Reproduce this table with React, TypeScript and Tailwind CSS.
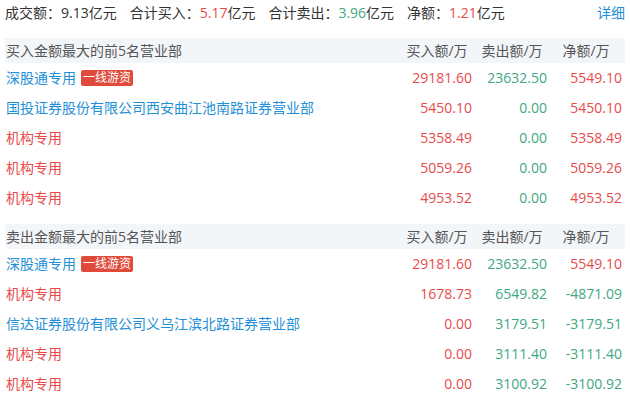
import React from "react";

const RED = "text-[#e84a4a]";
const GREEN = "text-[#3fa880]";
const BLUE = "text-[#1f8fd8]";

type Row = { name: string; badge?: boolean; link?: boolean; buy: string; sell: string; net: string };

const buyRows: Row[] = [
  { name: "深股通专用", badge: true, link: true, buy: "29181.60", sell: "23632.50", net: "5549.10" },
  { name: "国投证券股份有限公司西安曲江池南路证券营业部", link: true, buy: "5450.10", sell: "0.00", net: "5450.10" },
  { name: "机构专用", buy: "5358.49", sell: "0.00", net: "5358.49" },
  { name: "机构专用", buy: "5059.26", sell: "0.00", net: "5059.26" },
  { name: "机构专用", buy: "4953.52", sell: "0.00", net: "4953.52" },
];

const sellRows: Row[] = [
  { name: "深股通专用", badge: true, link: true, buy: "29181.60", sell: "23632.50", net: "5549.10" },
  { name: "机构专用", buy: "1678.73", sell: "6549.82", net: "-4871.09" },
  { name: "信达证券股份有限公司义乌江滨北路证券营业部", link: true, buy: "0.00", sell: "3179.51", net: "-3179.51" },
  { name: "机构专用", buy: "0.00", sell: "3111.40", net: "-3111.40" },
  { name: "机构专用", buy: "0.00", sell: "3100.92", net: "-3100.92" },
];

function colorOf(v: string) {
  if (v.startsWith("-")) return GREEN;
  return RED;
}

function Section({ title, rows }: { title: string; rows: Row[] }) {
  return (
    <div className="mx-[5px]">
      <div className="flex h-[25px] items-center bg-[#f3f6f9] pr-[3px] text-[#555555]">
        <div className="flex-1 pl-[1px]">{title}</div>
        <div className="w-[75px] pl-[5px] text-center">买入额/万</div>
        <div className="w-[75px] pl-[5px] text-center">卖出额/万</div>
        <div className="w-[75px] pl-[3px] text-center">净额/万</div>
      </div>
      {rows.map((r, i) => (
        <div key={i} className="flex h-[30px] items-center pr-[3px]">
          <div className={`flex flex-1 items-center pl-[1px] ${r.link ? BLUE : RED}`}>
            <span>{r.name}</span>
            {r.badge && (
              <span className="ml-[5px] flex h-[16px] items-center rounded-[2px] bg-[#e04a3b] px-[2px] text-[12px] leading-[16px] text-white">
                一线游资
              </span>
            )}
          </div>
          <div className={`w-[75px] text-right ${RED}`}>{r.buy}</div>
          <div className={`w-[75px] text-right ${GREEN}`}>{r.sell}</div>
          <div className={`w-[75px] text-right ${colorOf(r.net)}`}>{r.net}</div>
        </div>
      ))}
    </div>
  );
}

export default function App() {
  return (
    <div
      className="h-[399px] w-[630px] overflow-hidden bg-white text-[14px] leading-[20px] text-[#333333]"
      style={{ fontFamily: '"Open Sans", "Noto Sans CJK SC", sans-serif' }}
    >
      <div className="flex h-[25px] items-center px-[5px]">
        <span>
          成交额：<span>9.13</span>亿元
        </span>
        <span className="ml-[13px]">
          合计买入：<span className={RED}>5.17</span>亿元
        </span>
        <span className="ml-[13px]">
          合计卖出：<span className={GREEN}>3.96</span>亿元
        </span>
        <span className="ml-[13px]">
          净额：<span className={RED}>1.21</span>亿元
        </span>
        <span className={`ml-auto ${BLUE}`}>详细</span>
      </div>
      <div className="h-[13px]" />
      <Section title="买入金额最大的前5名营业部" rows={buyRows} />
      <div className="h-[11px]" />
      <Section title="卖出金额最大的前5名营业部" rows={sellRows} />
    </div>
  );
}
